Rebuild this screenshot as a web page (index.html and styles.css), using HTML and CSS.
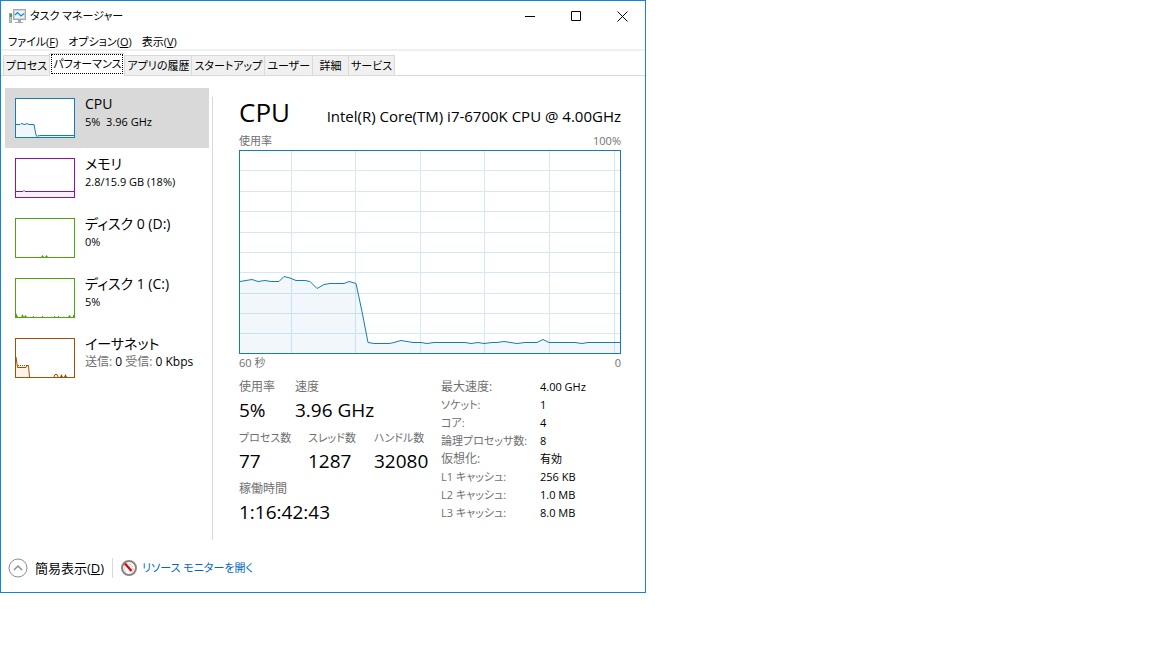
FILE: index.html
```html
<!DOCTYPE html>
<html lang="ja">
<head>
  <meta charset="UTF-8">
  <title>タスク マネージャー</title>
  <meta name="viewport" content="width=device-width, initial-scale=1.0">
  <link rel="stylesheet" href="styles.css">
</head>
<body>
  <div class="window">
    <header class="titlebar">
      <svg class="app-icon" width="17" height="16" viewBox="0 0 17 16">
        <rect x="0.5" y="5.5" width="2" height="9" fill="#c4c8cc" stroke="#a4a8ac"/>
        <rect x="1" y="6" width="2" height="3" fill="#3f9a3c"/>
        <rect x="4.5" y="1.5" width="12" height="10" fill="#d0d2d4" stroke="#a4a8ac"/>
        <rect x="6" y="3" width="9" height="7" fill="#e6f6fd"/>
        <path d="M6 7L8.500 4.500L12 8L15 5.500" fill="none" stroke="#1889c4" stroke-width="1.2"/>
        <path d="M9 12h3v2h2v1H6v-1h3z" fill="#a4a8ac"/>
      </svg>
      <h1 class="title">タスク マネージャー</h1>
      <button class="win-btn" aria-label="最小化">
        <svg width="11" height="11" viewBox="0 0 11 11"><path d="M0 5.5h10"/></svg>
      </button>
      <button class="win-btn" aria-label="最大化">
        <svg width="11" height="11" viewBox="0 0 11 11"><path d="M0.5 0.5h9v9h-9z"/></svg>
      </button>
      <button class="win-btn" aria-label="閉じる">
        <svg width="11" height="11" viewBox="0 0 11 11"><path d="M0.5 0.5l10 10M10.5 0.5l-10 10"/></svg>
      </button>
    </header>

    <nav class="menu">
      <button>ファイル(<u>F</u>)</button>
      <button>オプション(<u>O</u>)</button>
      <button>表示(<u>V</u>)</button>
    </nav>

    <div class="tabs" role="tablist">
      <button class="tab" role="tab">プロセス</button>
      <button class="tab active" role="tab" aria-selected="true"><span>パフォーマンス</span></button>
      <button class="tab" role="tab">アプリの履歴</button>
      <button class="tab" role="tab">スタートアップ</button>
      <button class="tab" role="tab">ユーザー</button>
      <button class="tab" role="tab">詳細</button>
      <button class="tab" role="tab">サービス</button>
    </div>

    <div class="content">
      <aside class="sidebar">
        <button class="item selected">
          <svg class="mini cpu" width="60" height="40" viewBox="0 0 60 40">
            <path class="area" d="M1 26.5H5L6 25.5L10 26.5L12 25.5L14 26.5H19L21 37L22 38.5L23 37.5L24 38L25 37.5H59V39H1z"/>
            <path d="M1 26.5H5L6 25.5L10 26.5L12 25.5L14 26.5H19L21 37L22 38.5L23 37.5L24 38L25 37.5H59"/>
            <rect x="0.5" y="0.5" width="59" height="39"/>
          </svg>
          <span class="item-text"><span class="name">CPU</span><span class="info">5%&nbsp; 3.96 GHz</span></span>
        </button>
        <button class="item">
          <svg class="mini mem" width="60" height="40" viewBox="0 0 60 40">
            <path class="area" d="M1 33.5H8L9 32.5L10 33.5H59V39H1z"/>
            <path d="M1 33.5H8L9 32.5L10 33.5H59"/>
            <rect x="0.5" y="0.5" width="59" height="39"/>
          </svg>
          <span class="item-text"><span class="name">メモリ</span><span class="info">2.8/15.9 GB (18%)</span></span>
        </button>
        <button class="item">
          <svg class="mini disk" width="60" height="40" viewBox="0 0 60 40">
            <path class="peaks" d="M26 39L27.5 37L29 39zM30 39L31.5 37L33 39z"/>
            <rect x="0.5" y="0.5" width="59" height="39"/>
          </svg>
          <span class="item-text"><span class="name">ディスク 0 (D:)</span><span class="info">0%</span></span>
        </button>
        <button class="item">
          <svg class="mini disk" width="60" height="40" viewBox="0 0 60 40">
            <path class="peaks" d="M1 35L3 39H1zM6 39L7.5 36L9 39zM9 39L10.5 37L12 39zM18 39v-1h1v1zM27 39v-1h1v1zM39 39v-1h1v1zM43 39v-1h1v1zM53 39L54.5 37L56 39zM58 39v-2h1v2z"/>
            <rect x="0.5" y="0.5" width="59" height="39"/>
          </svg>
          <span class="item-text"><span class="name">ディスク 1 (C:)</span><span class="info">5%</span></span>
        </button>
        <button class="item">
          <svg class="mini net" width="60" height="40" viewBox="0 0 60 40">
            <path class="area" d="M1 19L2 27.5H13L14.5 39H1z"/>
            <path d="M1 19L2.5 29.5H11L12 27.5H13.5L14.5 39M39 39L40 36.5H42L43 39"/>
            <path class="peaks" d="M45 39L46.5 36L48 39zM49 39L50.5 36L52 39z"/>
            <path d="M3 27.5H12" stroke-dasharray="1 1"/>
            <rect x="0.5" y="0.5" width="59" height="39"/>
          </svg>
          <span class="item-text"><span class="name">イーサネット</span><span class="info wide"><span class="dim">送信:</span> 0 <span class="dim">受信:</span> 0 Kbps</span></span>
        </button>
      </aside>

      <main class="main">
        <div class="heading">
          <h2>CPU</h2>
          <span class="model">Intel(R) Core(TM) i7-6700K CPU @ 4.00GHz</span>
        </div>
        <div class="caption"><span>使用率</span><span>100%</span></div>
        <svg class="chart" viewBox="0 0 382 204">
          <path class="grid" d="M52.5 1V203M116.5 1V203M181.5 1V203M245.5 1V203M310.5 1V203M375.5 1V203"/>
          <path class="grid" d="M1 20.5H381M1 41.5H381M1 61.5H381M1 82.5H381M1 102.5H381M1 122.5H381M1 143.5H381M1 163.5H381M1 183.5H381"/>
          <path class="area" d="M1 131.5L13 129.5L19 131.5L26 130.5L32 131.5H40L45 126.5L51 128L57 130.5H66L71 131.5L78 138.5L85 134.5L91 133.5H105L110 131.5L117 133.5L123 161.5L129 192.5L135 193.5H150L155 192.5L162 190.5L174 192.5H182L188 193.5L195 192.5H226L232 193.5L239 192.5L245 193.5L253 192.5H258L265 191.5L278 193.5L286 192.5H298L304 189.5L310 192.5H336L343 193.5L349 192.5H381V203H1z"/>
          <path class="line" d="M1 131.5L13 129.5L19 131.5L26 130.5L32 131.5H40L45 126.5L51 128L57 130.5H66L71 131.5L78 138.5L85 134.5L91 133.5H105L110 131.5L117 133.5L123 161.5L129 192.5L135 193.5H150L155 192.5L162 190.5L174 192.5H182L188 193.5L195 192.5H226L232 193.5L239 192.5L245 193.5L253 192.5H258L265 191.5L278 193.5L286 192.5H298L304 189.5L310 192.5H336L343 193.5L349 192.5H381"/>
          <rect class="line" x="0.5" y="0.5" width="381" height="203"/>
        </svg>
        <div class="caption"><span>60 秒</span><span>0</span></div>

        <div class="stats">
          <div>
            <dl class="row two">
              <div><dt>使用率</dt><dd>5%</dd></div>
              <div><dt>速度</dt><dd>3.96 GHz</dd></div>
            </dl>
            <dl class="row three">
              <div><dt class="kana">プロセス数</dt><dd>77</dd></div>
              <div><dt class="kana">スレッド数</dt><dd>1287</dd></div>
              <div><dt class="kana">ハンドル数</dt><dd>32080</dd></div>
            </dl>
            <dl class="row">
              <div><dt>稼働時間</dt><dd>1:16:42:43</dd></div>
            </dl>
          </div>
          <table class="details">
            <tr><th>最大速度:</th><td>4.00 GHz</td></tr>
            <tr><th class="kana">ソケット:</th><td>1</td></tr>
            <tr><th class="kana">コア:</th><td>4</td></tr>
            <tr><th class="kana">論理プロセッサ数:</th><td>8</td></tr>
            <tr><th>仮想化:</th><td>有効</td></tr>
            <tr><th class="kana">L1 キャッシュ:</th><td>256 KB</td></tr>
            <tr><th class="kana">L2 キャッシュ:</th><td>1.0 MB</td></tr>
            <tr><th class="kana">L3 キャッシュ:</th><td>8.0 MB</td></tr>
          </table>
        </div>
      </main>
    </div>

    <footer class="footer">
      <button class="fewer">
        <svg width="20" height="20" viewBox="0 0 20 20">
          <circle cx="10" cy="10" r="9" fill="#fff" stroke="#8c8c8c"/>
          <path d="M6 12l4-4l4 4" fill="none" stroke="#8c8c8c" stroke-width="1.5"/>
        </svg>
        <span>簡易表示(<u>D</u>)</span>
      </button>
      <a class="resmon" href="#">
        <svg width="16" height="16" viewBox="0 0 16 16">
          <circle cx="8" cy="8" r="7" fill="#fff" stroke="#8c8480" stroke-width="2"/>
          <path d="M5 12A5 5 0 0 1 4 5M8 4A5 5 0 0 1 11 12" fill="none" stroke="#e8a48c" stroke-dasharray="2 1"/>
          <path d="M4 3.5L10.5 11" stroke="#d01010" stroke-width="2.5"/>
        </svg>
        <span class="kana">リソース モニターを開く</span>
      </a>
    </footer>
  </div>
</body>
</html>
```

FILE: styles.css
```css
* {
  box-sizing: border-box;
}

body {
  margin: 0;
  background-color: #fff;
  color: #000;
  font-family: 'Open Sans', 'Noto Sans CJK JP', sans-serif;
  font-size: 12px;
  line-height: 18px;
  font-feature-settings: "palt";
}

button {
  padding: 0;
  border: none;
  background: none;
  color: inherit;
  font: inherit;
  font-feature-settings: inherit;
  text-align: left;
  white-space: nowrap;
}

h1, h2, dl, dd {
  margin: 0;
  font-weight: normal;
}

svg {
  display: block;
  flex: none;
}

.kana {
  font-size: 11px;
}

.window {
  max-width: 646px;
  border: 1px solid #1883d7;
}

.titlebar {
  display: flex;
  align-items: center;
  height: 30px;
  padding-left: 8px;
}

.title {
  flex: 1;
  margin-left: 4px;
  font-size: 11px;
}

.win-btn {
  display: flex;
  align-items: center;
  justify-content: center;
  width: 46px;
  height: 28px;
}

.win-btn path {
  fill: none;
  stroke: #000;
}

.menu {
  display: flex;
  gap: 10px;
  height: 20px;
  padding: 2px 0 0 7px;
  border-bottom: 2px solid #f0f0f0;
  font-size: 11px;
}

.tabs {
  display: flex;
  align-items: flex-end;
  height: 25px;
  padding-left: 2px;
  border-bottom: 1px solid #d9d9d9;
  font-size: 11px;
}

.tab {
  min-width: 36px;
  height: 20px;
  padding: 0 2px;
  border: 1px solid #d9d9d9;
  border-right: none;
  border-bottom: none;
  background-color: #f0f0f0;
  text-align: center;
}

.tab:last-child {
  border-right: 1px solid #d9d9d9;
}

.tab.active {
  height: 23px;
  margin-bottom: -1px;
  padding: 0 1px 2px;
  background-color: #fff;
}

.tab.active span {
  display: block;
  padding: 0 1px;
  border: 1px dotted #000;
}

.content {
  display: flex;
  padding: 12px 24px 0 4px;
}

.sidebar {
  display: flex;
  flex: none;
  flex-direction: column;
  width: 204px;
}

.item {
  display: flex;
  gap: 10px;
  height: 60px;
  padding: 10px;
}

.item.selected {
  background-color: #d9d9d9;
}

.item-text {
  display: flex;
  flex-direction: column;
  margin-top: -4px;
}

.name {
  font-size: 14px;
  line-height: 20px;
}

.info {
  font-size: 11px;
  line-height: 16px;
}

.info.wide {
  font-size: 12px;
}

.dim {
  color: #707070;
}

.mini {
  background-color: #fff;
  fill: none;
}

.mini .area {
  stroke: none;
}

.mini .peaks {
  stroke: none;
}

.cpu { stroke: #117dbb; }
.cpu .area { fill: #f1f6fa; }
.mem { stroke: #8b12ae; }
.mem .area { fill: #f4f2f4; }
.disk { stroke: #4da60c; }
.disk .peaks { fill: #4da60c; }
.net { stroke: #a74f01; }
.net .area { fill: #fcf3eb; }
.net .peaks { fill: #a74f01; }

.main {
  flex: 1;
  min-width: 0;
  margin: 9px 0 0 3px;
  padding: 0 0 9px 26px;
  border-left: 1px solid #d9d9d9;
}

.heading {
  display: flex;
  align-items: baseline;
  justify-content: space-between;
  height: 35px;
}

.heading h2 {
  font-size: 26px;
  line-height: 30px;
}

.model {
  font-size: 15px;
}

.caption {
  display: flex;
  justify-content: space-between;
  color: #707070;
  font-size: 11px;
}

.chart {
  width: 100%;
}

.chart .grid {
  stroke: #d3e8f1;
}

.chart .area {
  fill: #117dbb;
  fill-opacity: 0.06;
}

.chart .line {
  fill: none;
  stroke: #117dbb;
}

.stats {
  display: grid;
  grid-template-columns: 202px 1fr;
  margin-top: 6px;
}

.row {
  display: grid;
  margin-bottom: 5px;
}

.two {
  grid-template-columns: 56px 1fr;
}

.three {
  grid-template-columns: 69px 66px 1fr;
}

dt {
  color: #707070;
}

dd {
  font-size: 19px;
  line-height: 28px;
}

.details {
  align-self: start;
  border-collapse: collapse;
}

.details th, .details td {
  height: 18px;
  padding: 0;
  font-weight: normal;
  text-align: left;
}

.details th {
  width: 99px;
  color: #707070;
}

.details td {
  font-size: 11px;
}

.footer {
  display: flex;
  align-items: center;
  height: 52px;
  padding: 3px 7px 0;
}

.fewer, .resmon {
  display: flex;
  align-items: center;
}

.fewer {
  gap: 7px;
  padding-right: 8px;
  border-right: 1px solid #d9d9d9;
  font-size: 13px;
}

.resmon {
  gap: 5px;
  margin-left: 8px;
  color: #0066cc;
  text-decoration: none;
}
```
